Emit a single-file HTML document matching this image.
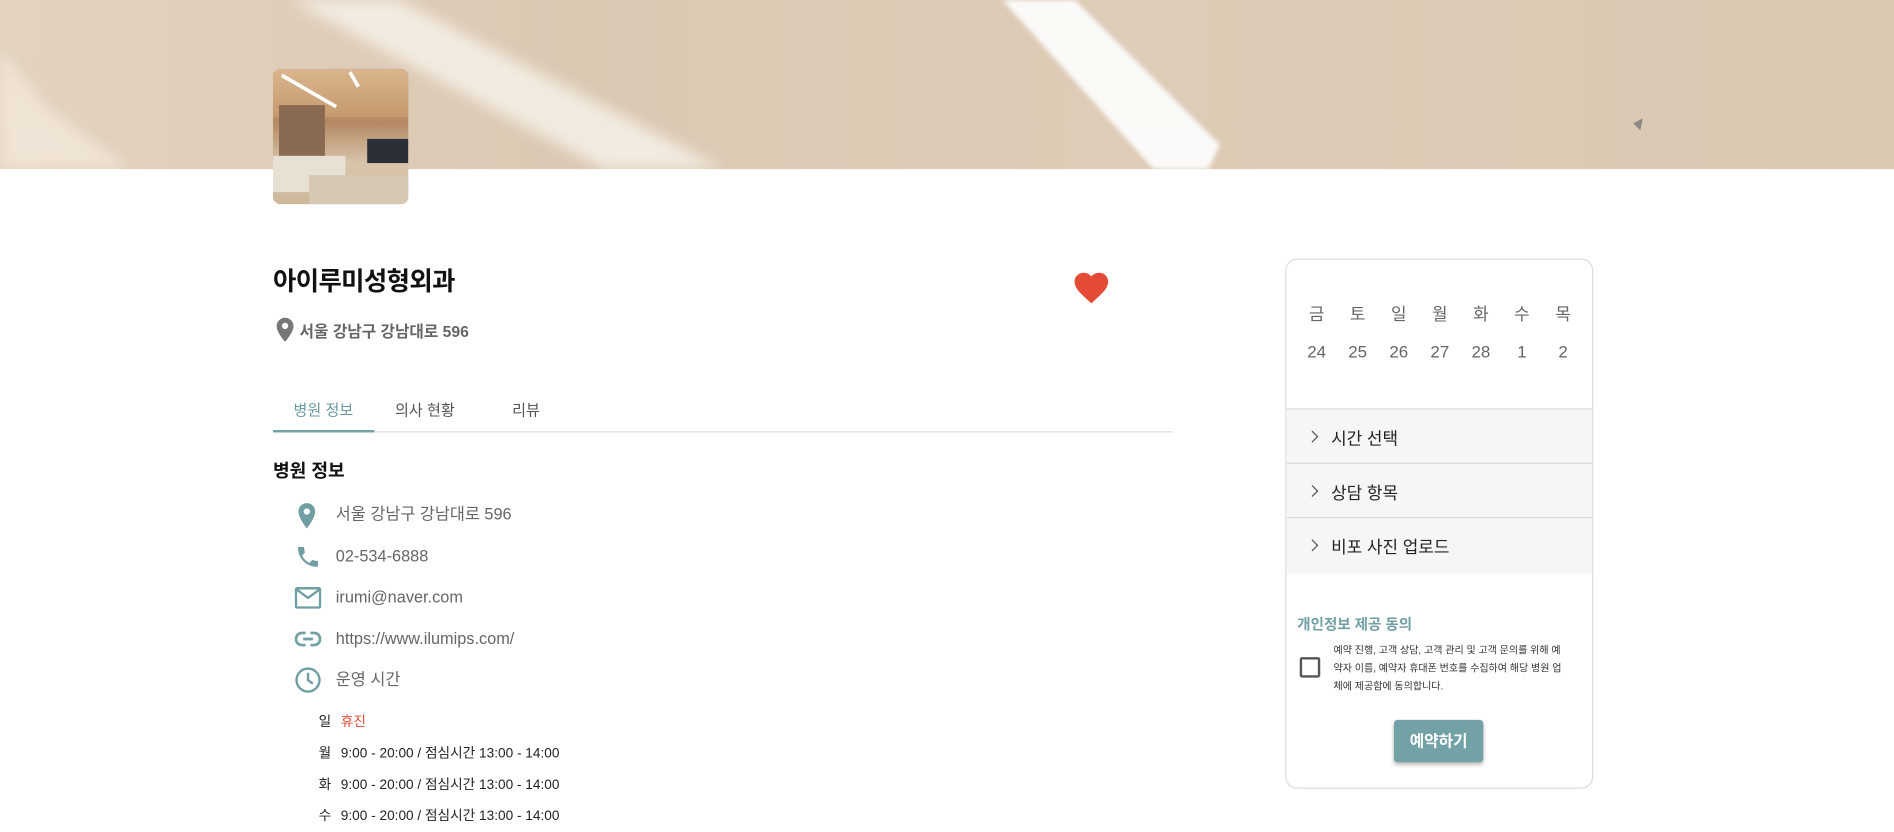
<!DOCTYPE html>
<html><head><meta charset="utf-8">
<style>
html,body{margin:0;padding:0;width:1894px;height:832px;overflow:hidden;background:#fff}
#w{position:absolute;left:0;top:0;width:1568px;height:689px;transform:scale(1.20791);transform-origin:0 0;font-family:"Liberation Sans","Noto Sans CJK KR",sans-serif}
.a{position:absolute;white-space:nowrap}
.banner{position:absolute;left:0;top:0;width:1568px;height:140px;overflow:hidden;background:linear-gradient(90deg,#e2d2bf 0%,#dac9b3 30%,#ddccb7 60%,#d9c8b2 100%)}
.row{position:absolute;left:278px;font-size:13.5px;color:#666;line-height:16px}
.ic{position:absolute;left:243px}
.hr{position:absolute;left:259px;font-size:11.3px;color:#222;line-height:14px}
.hr b{display:inline-block;width:20px;font-weight:normal;text-align:center}
.dw{position:absolute;width:34px;text-align:center;font-size:14px;color:#666}
.acc{position:absolute;left:1065px;width:253px;height:44px;background:#f6f6f6;border-top:1px solid #dcdcdc;font-size:14px;color:#222}
.acc span{position:absolute;left:37px;top:14px}
.acc i{position:absolute;left:18px;top:19px;width:6px;height:6px;border-top:1.3px solid #555;border-right:1.3px solid #555;transform:rotate(45deg)}
</style></head><body>
<div id="w">
<div class="banner">
 <svg width="1568" height="140" style="position:absolute;left:0;top:0">
  <defs><filter id="b"><feGaussianBlur stdDeviation="6"/></filter><filter id="b2"><feGaussianBlur stdDeviation="2"/></filter></defs>
  <polygon points="240,0 330,0 600,140 500,140" fill="#fbf6ef" opacity=".75" filter="url(#b)"/>
  <polygon points="830,0 890,0 1010,120 1000,140 955,140" fill="#fff" opacity=".9" filter="url(#b2)"/>
  <polygon points="0,40 40,90 110,140 0,140" fill="#f6ecde" opacity=".7" filter="url(#b)"/>
  <polygon points="1352,102 1360,98 1358,108" fill="#8c8884"/>
 </svg>
</div>
<div class="a" style="left:226px;top:57px;width:112px;height:112px;border-radius:6px;overflow:hidden;background:linear-gradient(180deg,#cfa77c 0%,#b58a63 40%,#d8c5ac 70%,#cdb89a 100%)">
 <div style="position:absolute;left:0;top:0;width:112px;height:40px;background:linear-gradient(180deg,#d9b58d,#c69a6e)"></div>
 <div style="position:absolute;left:8px;top:4px;width:52px;height:3px;background:#fff;transform:rotate(30deg);transform-origin:0 0"></div>
 <div style="position:absolute;left:65px;top:2px;width:14px;height:3px;background:#fff;transform:rotate(60deg);transform-origin:0 0"></div>
 <div style="position:absolute;left:5px;top:30px;width:38px;height:55px;background:#8a6a50"></div>
 <div style="position:absolute;left:0;top:72px;width:60px;height:30px;background:#e8e0d3"></div>
 <div style="position:absolute;left:78px;top:58px;width:34px;height:20px;background:#2b2f38"></div>
 <div style="position:absolute;left:30px;top:88px;width:82px;height:24px;background:#d6c8b3"></div>
</div>
<div class="a" style="left:226px;top:217px;font-size:21px;font-weight:bold;color:#111;letter-spacing:-0.5px">아이루미성형외과</div>
<svg class="a" style="left:889px;top:225px" width="29" height="27" viewBox="0 0 24 22"><path d="M12 21.5 L10.3 19.9 C4.2 14.4 0.5 11 0.5 6.6 0.5 3 3.3 0.5 6.8 0.5c2 0 3.9 1 5.2 2.5C13.3 1.5 15.2 0.5 17.2 0.5 20.7 0.5 23.5 3 23.5 6.6c0 4.4-3.7 7.8-9.8 13.3z" fill="#e34b37"/></svg>
<svg class="a" style="left:229px;top:263px" width="14" height="20" viewBox="0 0 24 34"><path d="M12 0C5.4 0 0 5.4 0 12c0 9 12 22 12 22s12-13 12-22C24 5.4 18.6 0 12 0zm0 16a4.5 4.5 0 110-9 4.5 4.5 0 010 9z" fill="#777"/></svg>
<div class="a" style="left:248px;top:264px;font-size:13px;font-weight:bold;color:#666">서울 강남구 강남대로 596</div>
<div class="a" style="left:243px;top:329px;font-size:12.5px;color:#6a9aa0">병원 정보</div>
<div class="a" style="left:327px;top:329px;font-size:12.5px;color:#555">의사 현황</div>
<div class="a" style="left:424px;top:329px;font-size:12.5px;color:#555">리뷰</div>
<div class="a" style="left:226px;top:357px;width:745px;height:1px;background:#ddd"></div>
<div class="a" style="left:226px;top:356px;width:84px;height:2px;background:#73a2a6"></div>
<div class="a" style="left:226px;top:379px;font-size:15px;font-weight:bold;color:#111">병원 정보</div>
<svg class="ic" style="left:247px;top:416px" width="14" height="22" viewBox="0 0 24 36"><path d="M12 0C5.4 0 0 5.4 0 12c0 9 12 24 12 24s12-15 12-24C24 5.4 18.6 0 12 0zm0 16.5a4.5 4.5 0 110-9 4.5 4.5 0 010 9z" fill="#6f9ea3"/></svg>
<div class="row" style="top:418px">서울 강남구 강남대로 596</div>
<svg class="ic" style="left:244px;top:450px" width="22" height="22" viewBox="0 0 24 24"><path d="M6.6 10.8c1.4 2.8 3.8 5.1 6.6 6.6l2.2-2.2c.3-.3.7-.4 1-.2 1.1.4 2.3.6 3.6.6.6 0 1 .4 1 1V20c0 .6-.4 1-1 1C10.6 21 3 13.4 3 4c0-.6.4-1 1-1h3.5c.6 0 1 .4 1 1 0 1.3.2 2.5.6 3.6.1.3 0 .7-.2 1z" fill="#6f9ea3"/></svg>
<div class="row" style="top:453px">02-534-6888</div>
<svg class="ic" style="left:244px;top:486px" width="22" height="18" viewBox="0 0 22 18"><rect x="1" y="1" width="20" height="16" rx="1" fill="none" stroke="#6f9ea3" stroke-width="2"/><path d="M1.5 2 L11 9 L20.5 2" fill="none" stroke="#6f9ea3" stroke-width="2"/></svg>
<div class="row" style="top:487px">irumi@naver.com</div>
<svg class="ic" style="left:244px;top:522px" width="22" height="14" viewBox="0 0 22 14"><path d="M9 2H6a5 5 0 000 10h3M13 2h3a5 5 0 010 10h-3M7 7h8" fill="none" stroke="#6f9ea3" stroke-width="2.2"/></svg>
<div class="row" style="top:521px">https://www.ilumips.com/</div>
<svg class="ic" style="left:244px;top:552px" width="22" height="22" viewBox="0 0 22 22"><circle cx="11" cy="11" r="9.5" fill="none" stroke="#6f9ea3" stroke-width="2"/><path d="M11 5v6l4 3" fill="none" stroke="#6f9ea3" stroke-width="2"/></svg>
<div class="row" style="top:555px">운영 시간</div>
<div class="hr" style="top:591px"><b>일</b> <span style="color:#e34b37">휴진</span></div>
<div class="hr" style="top:617px"><b>월</b> 9:00 - 20:00 / 점심시간 13:00 - 14:00</div>
<div class="hr" style="top:643px"><b>화</b> 9:00 - 20:00 / 점심시간 13:00 - 14:00</div>
<div class="hr" style="top:669px"><b>수</b> 9:00 - 20:00 / 점심시간 13:00 - 14:00</div>

<div class="a" style="left:1064px;top:214px;width:253px;height:437px;border:1px solid #dcdcdc;border-radius:10px"></div>
<div class="dw" style="left:1073px;top:250px">금</div><div class="dw" style="left:1107px;top:250px">토</div><div class="dw" style="left:1141px;top:250px">일</div><div class="dw" style="left:1175px;top:250px">월</div><div class="dw" style="left:1209px;top:250px">화</div><div class="dw" style="left:1243px;top:250px">수</div><div class="dw" style="left:1277px;top:250px">목</div>
<div class="dw" style="left:1073px;top:283px">24</div><div class="dw" style="left:1107px;top:283px">25</div><div class="dw" style="left:1141px;top:283px">26</div><div class="dw" style="left:1175px;top:283px">27</div><div class="dw" style="left:1209px;top:283px">28</div><div class="dw" style="left:1243px;top:283px">1</div><div class="dw" style="left:1277px;top:283px">2</div>
<div class="acc" style="top:338px"><i></i><span>시간 선택</span></div>
<div class="acc" style="top:383px"><i></i><span>상담 항목</span></div>
<div class="acc" style="top:428px;height:46px"><i></i><span>비포 사진 업로드</span></div>
<div class="a" style="left:1074px;top:508px;font-size:12px;font-weight:bold;color:#6f9ea3">개인정보 제공 동의</div>
<div class="a" style="left:1076px;top:544px;width:13px;height:13px;border:2px solid #555;border-radius:2px"></div>
<div class="a" style="left:1104px;top:531px;font-size:8.3px;line-height:15px;color:#333">예약 진행, 고객 상담, 고객 관리 및 고객 문의를 위해 예<br>약자 이름, 예약자 휴대폰 번호를 수집하여 해당 병원 업<br>체에 제공함에 동의합니다.</div>
<div class="a" style="left:1154px;top:596px;width:74px;height:35px;background:#73a2a6;border-radius:3px;box-shadow:0 2px 3px rgba(0,0,0,.25);color:#fff;font-size:13px;font-weight:bold;text-align:center;line-height:35px">예약하기</div>
</div>
</body></html>
